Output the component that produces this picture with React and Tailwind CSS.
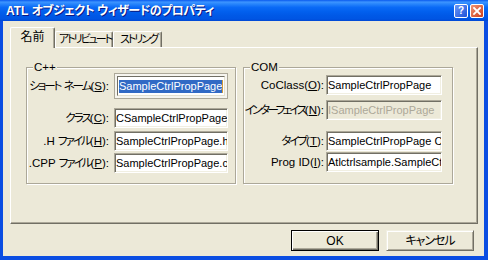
const font = "font-['Liberation_Sans','Noto_Sans_CJK_JP',sans-serif] [font-feature-settings:'palt']"

const sunken =
    'border border-t-[#ACA899] border-l-[#ACA899] border-r-white border-b-white shadow-[inset_1px_1px_0_#716F64,inset_-1px_-1px_0_#F1EFE2]'

// narrow kana, closer to the proportional UI font of the original dialog
function J({ children, tight }) {
    return <span className={tight ? 'tracking-[-2.5px]' : 'tracking-[-2px]'}>{children}</span>
}

function Label({ children, k, width }) {
    return (
        <div className={`${width} shrink-0 text-right text-[11.5px] leading-[14px] whitespace-nowrap text-black`}>
            {children}(<u>{k}</u>):
        </div>
    )
}

function Field({ value, width, disabled }) {
    return (
        <div
            className={`${width} h-[20px] shrink-0 ${sunken} ${disabled ? 'bg-[#ECE9D8] text-[#ACA899]' : 'bg-white text-black'} flex items-center overflow-hidden whitespace-nowrap text-[11px] leading-[13px]`}
        >
            <span className="pl-[1px]">{value}</span>
        </div>
    )
}

function Group({ title, children }) {
    return (
        <div className="relative w-[210px] h-[117px] shrink-0 border border-[#ACA899] shadow-[inset_1px_1px_0_#fff,1px_1px_0_#fff] flex flex-col">
            <div className="absolute -top-[8px] left-[6px] px-[1px] bg-[#ECE9D8] text-[11.5px] leading-[14px] text-black">
                {title}
            </div>
            {children}
        </div>
    )
}

function TitleBar() {
    return (
        <div className="h-[21px] shrink-0 flex items-center pl-[6px] pr-[4px] bg-[linear-gradient(to_bottom,#0A5AEE_0%,#3D95FF_10%,#2A87FC_18%,#0A6AF6_35%,#0260EE_55%,#0058E6_75%,#0055E3_90%,#0047D4_100%)]">
            <span className="pt-[1px] text-[12px] leading-none font-bold text-white whitespace-nowrap [text-shadow:1px_1px_0_#0A1883]">
                ATL <span className="tracking-[-0.5px]">オブジェクト ウィザードのプロパティ</span>
            </span>
            <div className="ml-auto flex gap-[2px]">
                <div className="w-[14px] h-[14px] rounded-[2px] border border-white bg-[linear-gradient(135deg,#6A98F8,#1F52D8)] flex items-center justify-center text-white text-[10px] font-bold leading-none">
                    ?
                </div>
                <div className="w-[14px] h-[14px] rounded-[2px] border border-white bg-[linear-gradient(135deg,#F09474,#CC3E1C)] flex items-center justify-center">
                    <svg width="8" height="8" viewBox="0 0 8 8">
                        <path d="M1 1L7 7M7 1L1 7" stroke="#fff" strokeWidth="1.8" strokeLinecap="square" />
                    </svg>
                </div>
            </div>
        </div>
    )
}

function Tabs() {
    const tab =
        'shrink-0 flex items-center justify-center bg-[#ECE9D8] border-l border-t border-r border-white border-r-[#716F64] rounded-t-[2px] shadow-[inset_-1px_0_0_#ACA899] leading-none text-black whitespace-nowrap'
    return (
        <div className="relative z-10 mt-[6px] h-[20px] flex items-end">
            <div className={`${tab} w-[45px] h-[21px] -mb-px pb-[2px] text-[12px]`}>名前</div>
            <div className={`${tab} w-[58px] h-[16px] text-[11px] tracking-[-2px] pl-[2px]`}>アトリビュート</div>
            <div className={`${tab} w-[49px] h-[16px] text-[11px] tracking-[-2px] pl-[2px]`}>ストリング</div>
        </div>
    )
}

function Panel() {
    return (
        <div className="h-[177px] shrink-0 border border-t-white border-l-white border-r-[#716F64] border-b-[#716F64] shadow-[inset_-1px_-1px_0_#ACA899] flex items-start pl-[15px] pt-[19px] gap-[7px]">
            <Group title="C++">
                <div className="mt-[5px] h-[26px] flex items-center">
                    <Label k="S" width="w-[82px]">
                        <J>ショート</J> <J>ネーム</J>
                    </Label>
                    <div className="ml-[5px] w-[114px] h-[26px] border border-[#ACA899] bg-[#F6F5EF] p-[2px]">
                        <div className="h-full border border-t-[#716F64] border-l-[#716F64] border-r-[#E3E0D0] border-b-[#E3E0D0] bg-white flex items-center overflow-hidden whitespace-nowrap text-[11px] leading-[13px]">
                            <span className="ml-[1px] bg-[#316AC5] text-white">SampleCtrlPropPage</span>
                            <span className="w-px h-[13px] bg-[#D09A3A]" />
                        </div>
                    </div>
                </div>
                <div className="mt-[9px] h-[20px] flex items-center">
                    <Label k="C" width="w-[82px]">
                        <J>クラス</J>
                    </Label>
                    <div className="ml-[5px]">
                        <Field value="CSampleCtrlPropPage" width="w-[114px]" />
                    </div>
                </div>
                <div className="mt-[3px] h-[20px] flex items-center">
                    <Label k="H" width="w-[82px]">
                        .H <J>ファイル</J>
                    </Label>
                    <div className="ml-[5px]">
                        <Field value="SampleCtrlPropPage.h" width="w-[114px]" />
                    </div>
                </div>
                <div className="mt-[2px] h-[20px] flex items-center">
                    <Label k="P" width="w-[82px]">
                        .CPP <J>ファイル</J>
                    </Label>
                    <div className="ml-[5px]">
                        <Field value="SampleCtrlPropPage.cpp" width="w-[114px]" />
                    </div>
                </div>
            </Group>
            <Group title="COM">
                <div className="mt-[7px] h-[20px] flex items-center gap-[2px]">
                    <Label k="O" width="w-[80px]">
                        CoClass
                    </Label>
                    <Field value="SampleCtrlPropPage" width="w-[116px]" />
                </div>
                <div className="mt-[5px] h-[20px] flex items-center gap-[2px]">
                    <Label k="N" width="w-[80px]">
                        <J tight>インターフェイス</J>
                    </Label>
                    <Field value="ISampleCtrlPropPage" width="w-[116px]" disabled />
                </div>
                <div className="mt-[11px] h-[20px] flex items-center gap-[2px]">
                    <Label k="T" width="w-[80px]">
                        <J>タイプ</J>
                    </Label>
                    <Field value="SampleCtrlPropPage Class" width="w-[116px]" />
                </div>
                <div className="mt-[1px] h-[20px] flex items-center gap-[2px]">
                    <Label k="I" width="w-[80px]">
                        Prog ID
                    </Label>
                    <Field value="Atlctrlsample.SampleCtrlPropPage" width="w-[116px]" />
                </div>
            </Group>
        </div>
    )
}

function Buttons() {
    return (
        <div className="mt-[6px] flex justify-end gap-[7px] pr-[4px]">
            <button className="w-[88px] h-[21px] border border-black bg-[#ECE9D8] shadow-[inset_1px_1px_0_#fff,inset_-1px_-1px_0_#716F64,inset_-2px_-2px_0_#ACA899] text-[12px] leading-none text-black">
                OK
            </button>
            <button className="w-[88px] h-[21px] border border-t-[#F1EFE2] border-l-[#F1EFE2] border-r-[#716F64] border-b-[#716F64] bg-[#ECE9D8] shadow-[inset_1px_1px_0_#fff,inset_-1px_-1px_0_#ACA899] text-[12px] leading-none text-black tracking-[-1px]">
                キャンセル
            </button>
        </div>
    )
}

export default function App() {
    return (
        <div className={`w-[488px] h-[260px] flex flex-col bg-[#0A4DE2] ${font}`}>
            <TitleBar />
            <div className="flex-1 ml-[3px] mr-[4px] mb-[4px] bg-[#ECE9D8] flex flex-col pl-[7px] pr-[6px]">
                <Tabs />
                <Panel />
                <Buttons />
            </div>
        </div>
    )
}
